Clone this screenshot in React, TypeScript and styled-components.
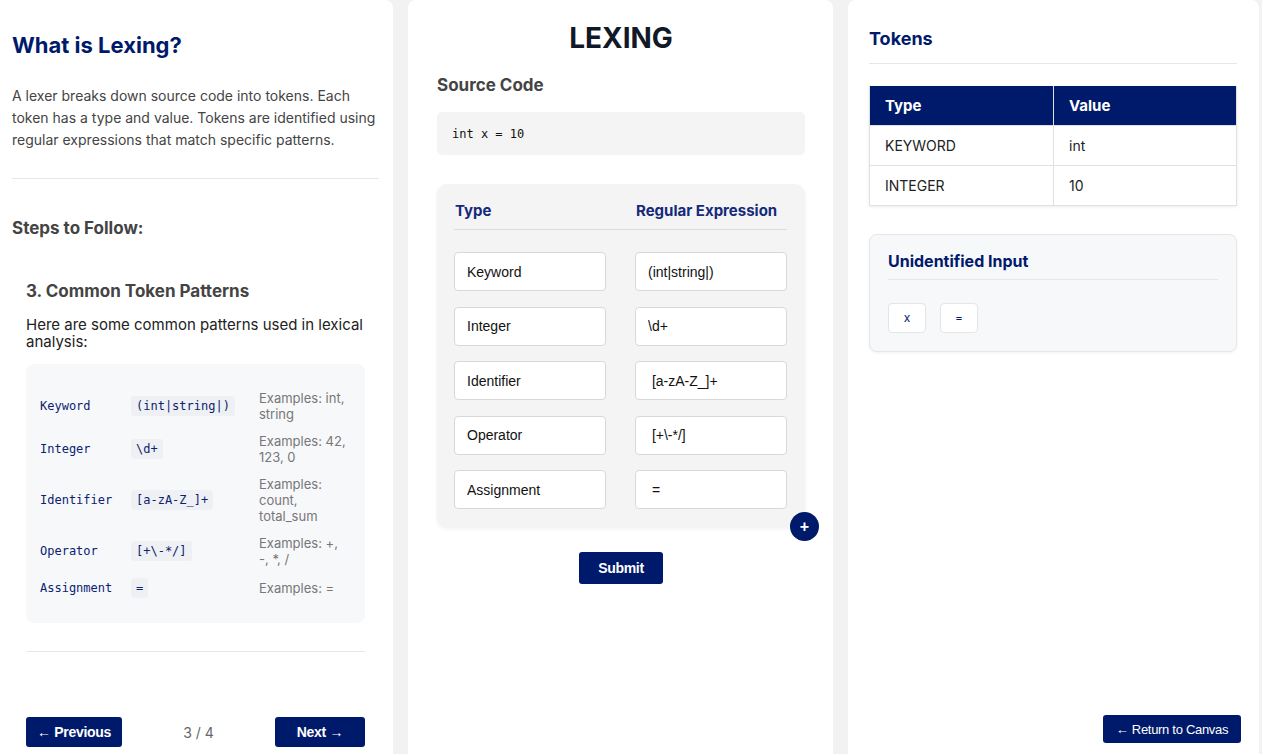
import React from "react";
import styled, { createGlobalStyle } from "styled-components";

const navy = "#001a6b";

const Global = createGlobalStyle`
  html, body { margin: 0; padding: 0; background: #f2f2f2; }
  body { font-family: Inter, "Noto Sans", sans-serif; overflow: hidden; }
  * { box-sizing: border-box; }
`;

const Page = styled.div`
  display: grid;
  grid-template-columns: 393px 425px 411px;
  column-gap: 15px;
  height: 754px;
`;

const Panel = styled.section<{ $pad: string }>`
  background: #fff;
  border-radius: 0 8px 0 0;
  padding: ${(p) => p.$pad};
  height: 754px;
  display: flex;
  flex-direction: column;
  position: relative;
`;

const Mid = styled(Panel)`
  border-radius: 8px 8px 0 0;
`;

const Right = styled(Panel)`
  border-radius: 8px 8px 0 0;
`;

const Title = styled.h1`
  margin: 0;
  font-size: 22px;
  font-weight: 700;
  color: ${navy};
  line-height: 28px;
`;

const Para = styled.p`
  margin: 26px 0 0;
  font-size: 14px;
  line-height: 22px;
  color: #444;
`;

const Rule = styled.hr<{ $m: string }>`
  border: 0;
  border-top: 1px solid #e5e7eb;
  margin: ${(p) => p.$m};
`;

const Heading = styled.h3<{ $color?: string }>`
  margin: 0;
  font-size: 17px;
  font-weight: 700;
  line-height: 22px;
  color: ${(p) => p.$color || "#444"};
`;

const Step = styled.div`
  padding: 41px 14px 0;
  display: flex;
  flex-direction: column;
  flex: 1;
`;

const Lead = styled.p`
  margin: 14px 0 14px;
  font-size: 15px;
  line-height: 17px;
  color: #222;
`;

const PatternBox = styled.div`
  background: #f7f8fa;
  border-radius: 8px;
  padding: 26px 14px 25px;
  display: grid;
  grid-template-columns: 91px 128px 1fr;
  row-gap: 11px;
  align-items: center;
`;

const Mono = styled.span`
  font-family: "DejaVu Sans Mono", "Liberation Mono", monospace;
  font-size: 12px;
  color: #0b2270;
`;

const Chip = styled(Mono)`
  justify-self: start;
  background: #eef0f3;
  border-radius: 3px;
  padding: 3px 5px;
`;

const Example = styled.span`
  font-size: 13px;
  line-height: 16px;
  color: #777;
`;

const Nav = styled.div`
  margin-top: auto;
  margin-bottom: 7px;
  display: flex;
  justify-content: space-between;
  align-items: center;
`;

const NavyButton = styled.button<{ $w?: number; $h?: number; $bold?: boolean; $size?: number }>`
  background: ${navy};
  color: #fff;
  border: 0;
  border-radius: 3px;
  width: ${(p) => (p.$w ? p.$w + "px" : "auto")};
  height: ${(p) => (p.$h || 30) + "px"};
  font-family: "Liberation Sans", Arial, sans-serif;
  font-weight: ${(p) => (p.$bold === false ? 400 : 700)};
  font-size: ${(p) => (p.$size || 14) + "px"};
  letter-spacing: -0.3px;
  padding: 0;
`;

const Counter = styled.span`
  font-size: 14px;
  color: #666;
`;

const BigTitle = styled.h1`
  margin: 0 0 19px;
  text-align: center;
  font-size: 28px;
  font-weight: 700;
  color: #111827;
  line-height: 34px;
`;

const CodeBox = styled.div`
  margin-top: 16px;
  background: #f4f4f4;
  border-radius: 5px;
  height: 43px;
  padding: 0 15px;
  display: flex;
  align-items: center;
`;

const RegexCard = styled.div`
  margin-top: 29px;
  background: #f4f4f4;
  border-radius: 10px;
  box-shadow: 0 2px 4px rgba(0, 0, 0, 0.06);
  padding: 18px 18px 18px 17px;
  position: relative;
`;

const RegexGrid = styled.div`
  display: grid;
  grid-template-columns: 152px 152px;
  justify-content: space-between;
  row-gap: 15.5px;
`;

const ColHead = styled.div`
  font-size: 15px;
  font-weight: 700;
  color: #142a7a;
  line-height: 18px;
  padding-left: 1px;
`;

const HeadRule = styled.div`
  grid-column: 1 / -1;
  border-top: 1px solid #dcdcdc;
  margin: -7px 0 7px;
`;

const Field = styled.input`
  height: 39px;
  width: 152px;
  border: 1px solid #d8d8d8;
  border-radius: 4px;
  background: #fff;
  padding: 0 12px;
  font-family: "Liberation Sans", Arial, sans-serif;
  font-size: 14px;
  color: #111;
  outline: none;
`;

const Plus = styled.button`
  position: absolute;
  right: -14px;
  bottom: -14px;
  width: 29px;
  height: 29px;
  border-radius: 50%;
  border: 0;
  background: ${navy};
  color: #fff;
  font-size: 16px;
  font-weight: 700;
  line-height: 29px;
  padding: 0;
`;

const Center = styled.div`
  display: flex;
  justify-content: center;
  margin-top: 25px;
`;

const SideTitle = styled.h2`
  margin: 0;
  font-size: 18px;
  font-weight: 700;
  color: ${navy};
  line-height: 22px;
`;

const Table = styled.table`
  margin-top: 22px;
  width: 100%;
  border-collapse: collapse;
  box-shadow: 0 1px 3px rgba(0, 0, 0, 0.08);
  font-size: 14px;
`;

const Th = styled.th<{ $w?: number }>`
  background: ${navy};
  color: #fff;
  text-align: left;
  font-weight: 700;
  font-size: 15px;
  height: 39px;
  width: ${(p) => (p.$w ? p.$w + "px" : "auto")};
  padding: 0 15px;
  border: 1px solid #e0e0e0;
  border-top: 0;
`;

const Td = styled.td`
  height: 40px;
  padding: 0 15px;
  color: #222;
  border: 1px solid #e0e0e0;
`;

const Unident = styled.div`
  margin-top: 28px;
  background: #f7f8fa;
  border: 1px solid #e5e7eb;
  border-radius: 8px;
  box-shadow: 0 1px 3px rgba(0, 0, 0, 0.06);
  padding: 16px 18px 18px 18px;
`;

const SubTitle = styled.h3`
  margin: 0;
  font-size: 16px;
  font-weight: 700;
  color: ${navy};
  line-height: 20px;
`;

const Chips = styled.div`
  display: flex;
  gap: 14px;
`;

const TokenChip = styled.span`
  width: 38px;
  height: 30px;
  background: #fff;
  border: 1px solid #e3e5e8;
  border-radius: 4px;
  display: flex;
  align-items: center;
  justify-content: center;
  font-size: 12px;
  color: ${navy};
`;

const Bottom = styled.div`
  margin-top: auto;
  margin-bottom: 11px;
  display: flex;
  justify-content: flex-end;
  margin-right: -4px;
`;

const patterns = [
  { type: "Keyword", re: "(int|string|)", ex: "Examples: int, string" },
  { type: "Integer", re: "\\d+", ex: "Examples: 42, 123, 0" },
  { type: "Identifier", re: "[a-zA-Z_]+", ex: "Examples: count, total_sum" },
  { type: "Operator", re: "[+\\-*/]", ex: "Examples: +, -, *, /" },
  { type: "Assignment", re: "=", ex: "Examples: =" },
];

const fields = [
  ["Keyword", "(int|string|)"],
  ["Integer", "\\d+"],
  ["Identifier", " [a-zA-Z_]+"],
  ["Operator", " [+\\-*/]"],
  ["Assignment", " ="],
];

export default function App() {
  return (
    <>
      <Global />
      <Page>
        <Panel $pad="31px 14px 0 12px">
          <Title>What is Lexing?</Title>
          <Para>
            A lexer breaks down source code into tokens. Each token has a type and value. Tokens are identified
            using regular expressions that match specific patterns.
          </Para>
          <Rule $m="27px 0 38px" />
          <Heading>Steps to Follow:</Heading>
          <Step>
            <Heading>3. Common Token Patterns</Heading>
            <Lead>Here are some common patterns used in lexical analysis:</Lead>
            <PatternBox>
              {patterns.map((p) => (
                <React.Fragment key={p.type}>
                  <Mono>{p.type}</Mono>
                  <Chip>{p.re}</Chip>
                  <Example>{p.ex}</Example>
                </React.Fragment>
              ))}
            </PatternBox>
            <Rule $m="28px 0 0" />
            <Nav>
              <NavyButton $w={96}>← Previous</NavyButton>
              <Counter>3 / 4</Counter>
              <NavyButton $w={90}>Next →</NavyButton>
            </Nav>
          </Step>
        </Panel>

        <Mid $pad="21px 28px 0 29px">
          <BigTitle>LEXING</BigTitle>
          <Heading>Source Code</Heading>
          <CodeBox>
            <Mono style={{ color: "#111" }}>int x = 10</Mono>
          </CodeBox>
          <RegexCard>
            <RegexGrid>
              <ColHead>Type</ColHead>
              <ColHead>Regular Expression</ColHead>
              <HeadRule />
              {fields.map(([t, r]) => (
                <React.Fragment key={t}>
                  <Field defaultValue={t} />
                  <Field defaultValue={r} />
                </React.Fragment>
              ))}
            </RegexGrid>
            <Plus>+</Plus>
          </RegexCard>
          <Center>
            <NavyButton $w={84} $h={32}>Submit</NavyButton>
          </Center>
        </Mid>

        <Right $pad="28px 22px 0 21px">
          <SideTitle>Tokens</SideTitle>
          <Rule $m="13px 0 0" />
          <Table>
            <thead>
              <tr>
                <Th $w={184}>Type</Th>
                <Th>Value</Th>
              </tr>
            </thead>
            <tbody>
              <tr>
                <Td>KEYWORD</Td>
                <Td>int</Td>
              </tr>
              <tr>
                <Td>INTEGER</Td>
                <Td>10</Td>
              </tr>
            </tbody>
          </Table>
          <Unident>
            <SubTitle>Unidentified Input</SubTitle>
            <Rule $m="8px 0 23px" />
            <Chips>
              <TokenChip>x</TokenChip>
              <TokenChip>=</TokenChip>
            </Chips>
          </Unident>
          <Bottom>
            <NavyButton $w={138} $h={28} $bold={false} $size={13}>← Return to Canvas</NavyButton>
          </Bottom>
        </Right>
      </Page>
    </>
  );
}
